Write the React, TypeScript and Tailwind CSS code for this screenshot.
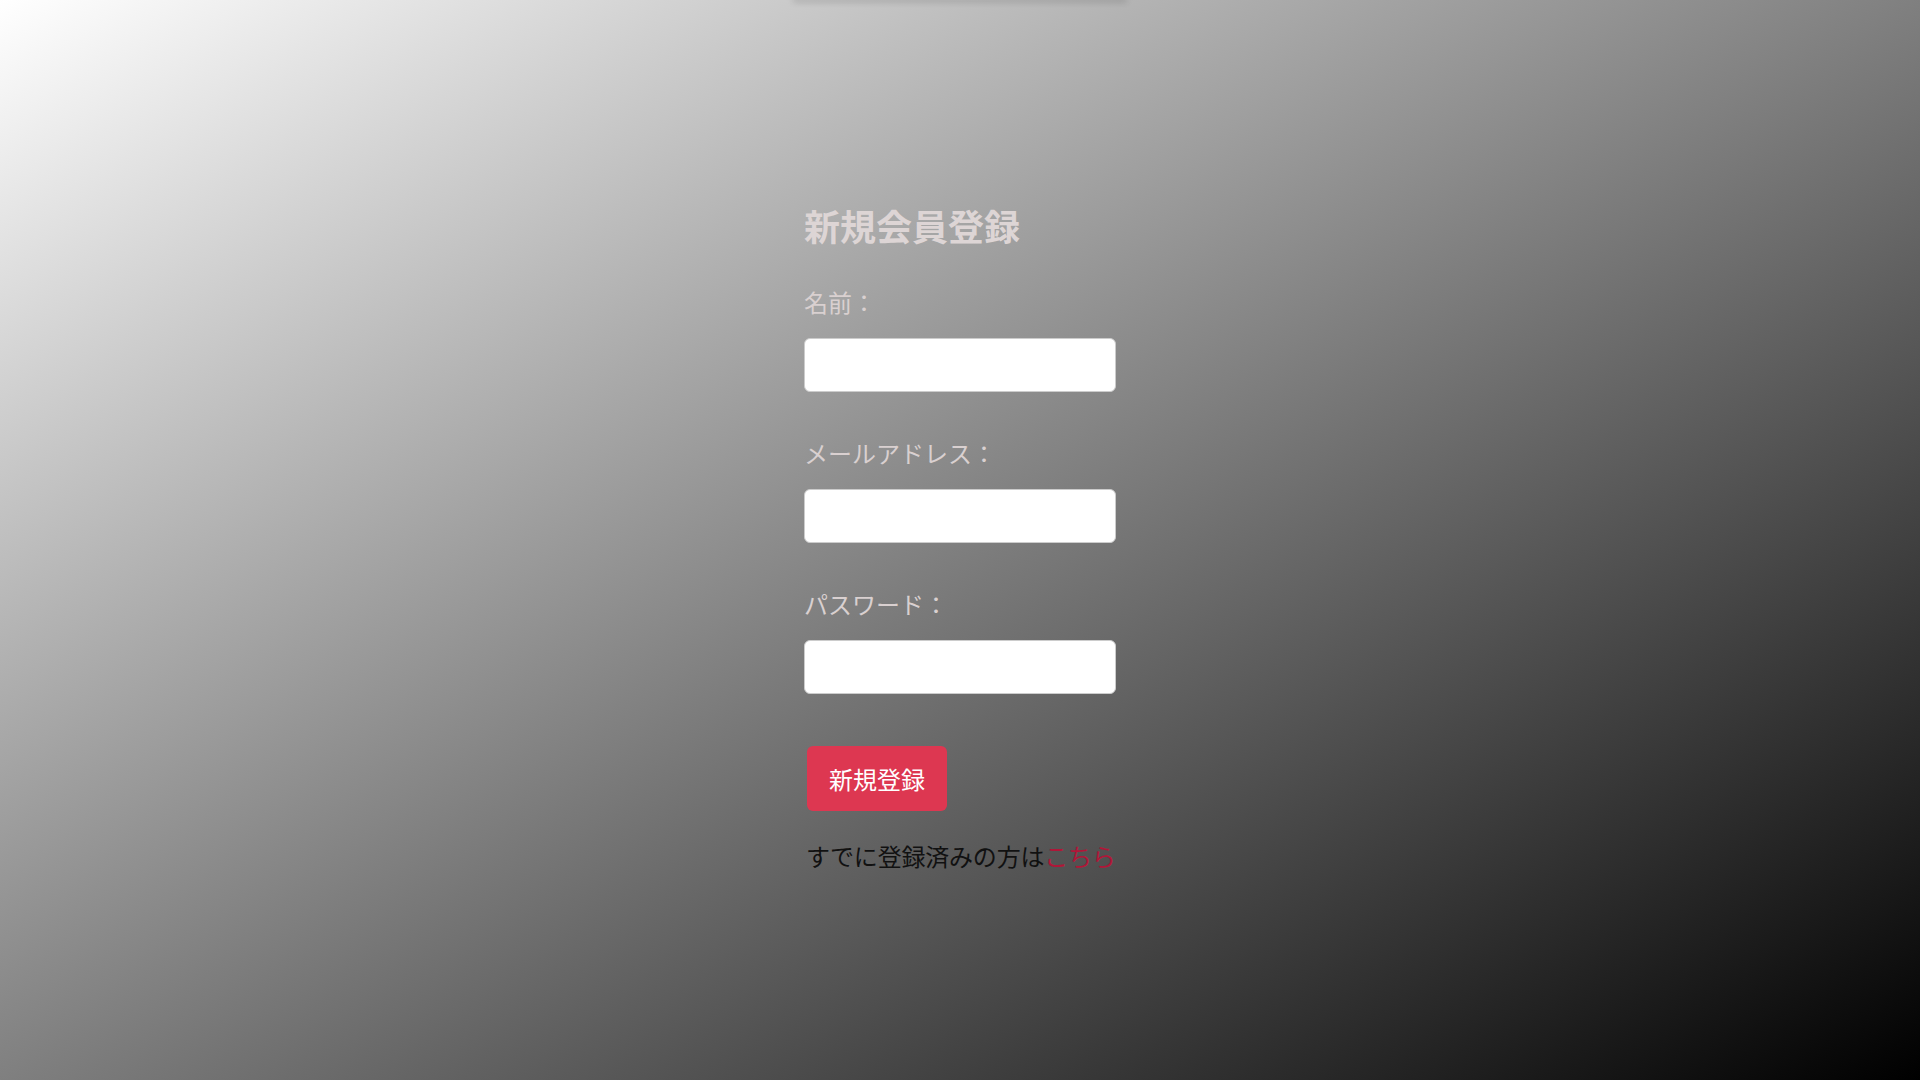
export default function App() {
  return (
    <div
      className="min-h-screen w-full bg-[linear-gradient(to_bottom_right,#ffffff,#000000)] font-['Noto_Sans_CJK_JP','Noto_Sans',sans-serif]"
    >
      {/* faint header shadow at top edge */}
      <div className="mx-auto h-0 w-[330px] shadow-[0_0_6px_2px_rgba(0,0,0,0.18)]" />

      <div className="mx-auto w-[312px] pt-[207px]">
        <h1 className="text-[36px] font-bold leading-none text-[#ddd5d5]">
          新規会員登録
        </h1>

        <form className="mt-[47px] flex flex-col" onSubmit={(e) => e.preventDefault()}>
          <label className="text-[24px] leading-none text-[#d9d0d0]">名前：</label>
          <input
            type="text"
            className="mt-[24px] h-[54px] w-[312px] rounded-[6px] border border-[#cccccc] bg-white px-3 outline-none"
          />

          <label className="mt-[49px] text-[24px] leading-none text-[#d9d0d0]">
            メールアドレス：
          </label>
          <input
            type="email"
            className="mt-[24px] h-[54px] w-[312px] rounded-[6px] border border-[#cccccc] bg-white px-3 outline-none"
          />

          <label className="mt-[49px] text-[24px] leading-none text-[#d9d0d0]">
            パスワード：
          </label>
          <input
            type="password"
            className="mt-[24px] h-[54px] w-[312px] rounded-[6px] border border-[#cccccc] bg-white px-3 outline-none"
          />

          <div className="mt-[52px]">
            <button
              type="submit"
              className="ml-[3px] h-[65px] w-[140px] rounded-[6px] bg-[#dd3751] text-[24px] leading-none text-white"
            >
              新規登録
            </button>
          </div>
        </form>

        <p className="ml-[2px] mt-[33px] whitespace-nowrap text-[24px] leading-none tracking-[-0.2px] text-[#111111]">
          すでに登録済みの方は<a href="#" className="text-[#b01638]">こちら</a>
        </p>
      </div>
    </div>
  );
}
